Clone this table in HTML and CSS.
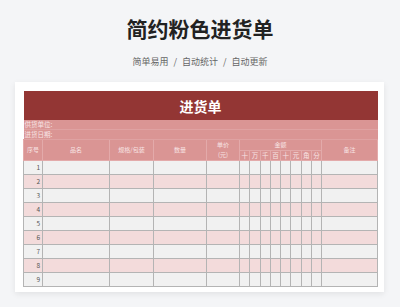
FILE: index.html
```html
<!DOCTYPE html>
<html lang="zh-CN">
<head>
<meta charset="utf-8">
<title>简约粉色进货单</title>
<link rel="stylesheet" href="styles.css">
</head>
<body>
<header class="hero">
  <h1 class="hero-title">简约粉色进货单</h1>
  <p class="hero-sub">简单易用<span class="sep">/</span>自动统计<span class="sep">/</span>自动更新</p>
</header>
<main class="card">
  <table class="sheet">
    <colgroup>
      <col class="c-no"><col class="c-name"><col class="c-spec"><col class="c-qty"><col class="c-price">
      <col class="c-d"><col class="c-d"><col class="c-d"><col class="c-d"><col class="c-d"><col class="c-d"><col class="c-d"><col class="c-d">
      <col class="c-note">
    </colgroup>
    <tr class="r-title"><td colspan="14">进货单</td></tr>
    <tr class="r-info"><td colspan="14">供货单位:</td></tr>
    <tr class="r-info"><td colspan="14">进货日期:</td></tr>
    <tr class="r-head">
      <th rowspan="2">序号</th>
      <th rowspan="2">品名</th>
      <th rowspan="2">规格/包装</th>
      <th rowspan="2">数量</th>
      <th rowspan="2" class="price">单价<br>(元)</th>
      <th colspan="8" class="amt">金额</th>
      <th rowspan="2">备注</th>
    </tr>
    <tr class="r-head r-sub">
      <th>十</th><th>万</th><th>千</th><th>百</th><th>十</th><th>元</th><th>角</th><th>分</th>
    </tr>
    <tr class="r-data"><td class="no">1</td><td></td><td></td><td></td><td></td><td></td><td></td><td></td><td></td><td></td><td></td><td></td><td></td><td></td></tr>
    <tr class="r-data alt"><td class="no">2</td><td></td><td></td><td></td><td></td><td></td><td></td><td></td><td></td><td></td><td></td><td></td><td></td><td></td></tr>
    <tr class="r-data"><td class="no">3</td><td></td><td></td><td></td><td></td><td></td><td></td><td></td><td></td><td></td><td></td><td></td><td></td><td></td></tr>
    <tr class="r-data alt"><td class="no">4</td><td></td><td></td><td></td><td></td><td></td><td></td><td></td><td></td><td></td><td></td><td></td><td></td><td></td></tr>
    <tr class="r-data"><td class="no">5</td><td></td><td></td><td></td><td></td><td></td><td></td><td></td><td></td><td></td><td></td><td></td><td></td><td></td></tr>
    <tr class="r-data alt"><td class="no">6</td><td></td><td></td><td></td><td></td><td></td><td></td><td></td><td></td><td></td><td></td><td></td><td></td><td></td></tr>
    <tr class="r-data"><td class="no">7</td><td></td><td></td><td></td><td></td><td></td><td></td><td></td><td></td><td></td><td></td><td></td><td></td><td></td></tr>
    <tr class="r-data alt"><td class="no">8</td><td></td><td></td><td></td><td></td><td></td><td></td><td></td><td></td><td></td><td></td><td></td><td></td><td></td></tr>
    <tr class="r-data"><td class="no">9</td><td></td><td></td><td></td><td></td><td></td><td></td><td></td><td></td><td></td><td></td><td></td><td></td><td></td></tr>
  </table>
</main>
</body>
</html>
```
FILE: styles.css
```css
html, body {
  margin: 0;
  padding: 0;
}
body {
  background: #f4f5f7;
  font-family: "Noto Sans CJK SC", "Noto Sans", sans-serif;
  height: 307px;
  overflow: hidden;
}
.hero {
  text-align: center;
  padding-top: 16px;
}
.hero-title {
  margin: 0;
  font-size: 21px;
  line-height: 24px;
  font-weight: 700;
  color: #222;
}
.hero-sub {
  margin: 16px 0 0;
  font-size: 9px;
  line-height: 12px;
  color: #666;
}
.sep {
  margin: 0 5px;
}
.card {
  display: block;
  margin: 14px 0 0 15px;
  width: 354px;
  padding: 9px 7px 5px 8px;
  background: #fff;
  box-shadow: 0 2px 6px rgba(0, 0, 0, 0.08);
}
.sheet {
  width: 354px;
  border-collapse: collapse;
  table-layout: fixed;
}
.c-no { width: 19px; }
.c-name { width: 67px; }
.c-spec { width: 44px; }
.c-qty { width: 53px; }
.c-price { width: 33px; }
.c-d { width: 10.25px; }
.c-note { width: 56px; }
.sheet td, .sheet th {
  padding: 0;
}
.r-title td {
  height: 29px;
  background: #933634;
  color: #fff;
  font-size: 14px;
  font-weight: 700;
  text-align: center;
  line-height: 1;
}
.r-info td {
  height: 9px;
  background: #da9594;
  color: #f8e4e4;
  font-size: 6.5px;
  line-height: 9px;
  padding-left: 1px;
  border-bottom: 1px solid #dfa2a2;
}
.r-head th {
  background: #da9594;
  color: #f8e4e4;
  font-size: 6px;
  font-weight: 400;
  line-height: 8px;
  height: 9px;
  border: 1px solid #e3aaaa;
}
.r-head th.price {
  line-height: 10px;
}
.r-sub th {
  font-size: 6.5px;
}
.r-data td {
  height: 13px;
  background: #f1f1f1;
  border: 1px solid #b4b4b4;
}
.r-data.alt td {
  background: #f3dbdb;
}
.r-data td.no {
  text-align: right;
  padding-right: 2px;
  font-size: 6.5px;
  line-height: 1;
  color: #555;
}
```
